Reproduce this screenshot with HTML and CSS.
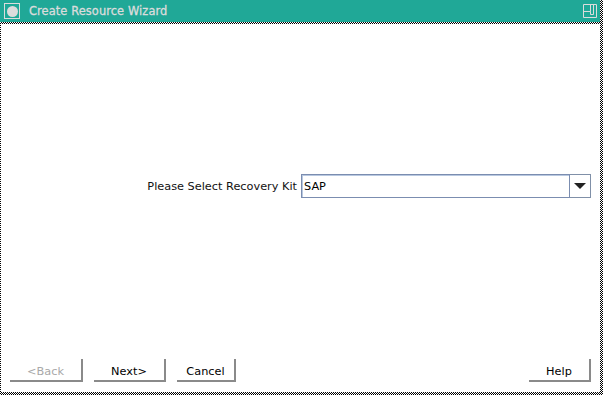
FILE: index.html
```html
<!DOCTYPE html>
<html lang="en">
  <head>
    <meta charset="UTF-8" />
    <title>Create Resource Wizard</title>
    <link rel="stylesheet" href="styles.css">
  </head>
  <body>
    <div class="window">
      <div class="titlebar">
        <div class="menu_btn"><span class="dot"></span></div>
        <div class="title">Create Resource Wizard</div>
        <svg class="max_btn" width="16" height="16" viewBox="0 0 16 16">
          <path d="M1.5 14.5 V1.5 H14.5 V14.5 Z M1.5 8.5 H8.5 V1.5 M8.5 8.5 V11.5 H11.5 V1.5" fill="none" stroke="#dcdcdc" stroke-width="1"/>
        </svg>
      </div>
      <div class="content">
        <div class="select_row">
          <label for="kit">Please Select Recovery Kit</label>
          <div class="combo">
            <div class="combo_field" id="kit">SAP</div>
            <div class="combo_arrow"><span class="tri"></span></div>
          </div>
        </div>
        <div class="buttons">
          <button class="btn back" disabled>&lt;Back</button>
          <button class="btn next">Next&gt;</button>
          <button class="btn cancel">Cancel</button>
          <span class="spacer"></span>
          <button class="btn help">Help</button>
        </div>
      </div>
    </div>
  </body>
</html>
```

FILE: styles.css
```css
body {
  margin: 0;
  font-family: "DejaVu Sans", sans-serif;
  font-size: 11.3px;
}

.window {
  display: flex;
  flex-direction: column;
  width: 603px;
  height: 395px;
  box-sizing: border-box;
  background-color: #fff;
  background-image: repeating-conic-gradient(#000 0 25%, #fff 0 50%);
  background-size: 2px 2px;
}

.titlebar {
  display: flex;
  align-items: center;
  height: 22px;
  margin-right: 3px;
  background-color: #20a897;
  color: #dcdcdc;
}

.menu_btn {
  display: flex;
  align-items: center;
  justify-content: center;
  width: 14px;
  height: 14px;
  margin-left: 4px;
  border: 1px solid #dcdcdc;
}
.dot {
  width: 11px;
  height: 11px;
  border-radius: 50%;
  background: #dcdcdc;
}

.title {
  margin-left: 9px;
  font-size: 11.4px;
  letter-spacing: 0.1px;
  flex: 1;
  -webkit-text-stroke: 0.3px #dcdcdc;
}

.max_btn {
  margin-right: 2px;
}

.content {
  flex: 1;
  display: flex;
  flex-direction: column;
  margin: 2px 3px 3px 1px;
  padding: 150px 9px 10px 9px;
  background: #fff;
}

.select_row {
  display: flex;
  justify-content: flex-end;
  align-items: flex-start;
  gap: 4px;
  flex: 1;
}
.select_row label {
  line-height: 25px;
  color: #111;
}

.combo {
  display: flex;
  width: 290px;
  height: 24px;
}
.combo_field {
  flex: 1;
  border: 1px solid #7b8db0;
  box-shadow: inset 1px 1px 0 #b8c8e0;
  padding-left: 2px;
  line-height: 23px;
  color: #000;
}
.combo_arrow {
  display: flex;
  align-items: center;
  justify-content: center;
  width: 20px;
  border: 1px solid #8090a8;
  border-left: none;
}
.tri {
  width: 0;
  height: 0;
  border-left: 6px solid transparent;
  border-right: 6px solid transparent;
  border-top: 6px solid #222;
}

.buttons {
  display: flex;
  gap: 11px;
}
.spacer {
  flex: 1;
}
.btn {
  height: 23px;
  padding: 3px 0 0 0;
  font-family: "DejaVu Sans", sans-serif;
  font-size: 11.3px;
  color: #000;
  background: #fff;
  border: none;
  border-right: 2px solid #8a8a8a;
  border-bottom: 2px solid #8a8a8a;
}
.btn:disabled {
  color: #a8a8a8;
}
.back { width: 73px; }
.next { width: 72px; }
.cancel { width: 59px; }
.help { width: 62px; }
```
